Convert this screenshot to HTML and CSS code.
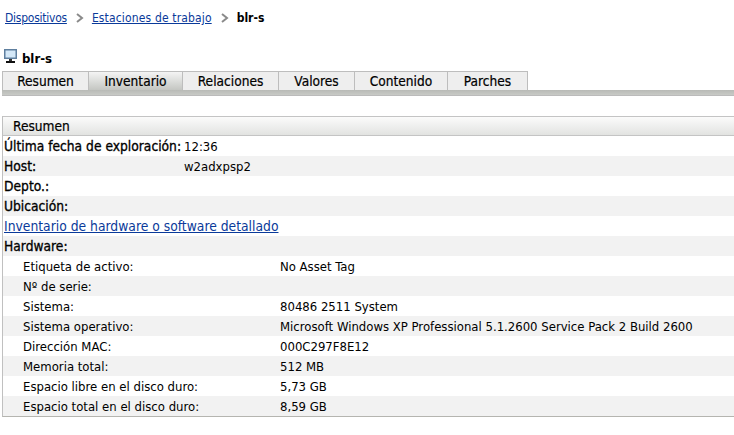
FILE: index.html
```html
<!DOCTYPE html>
<html lang="es">
<head>
<meta charset="utf-8">
<title>blr-s</title>
<link rel="stylesheet" href="styles.css">
</head>
<body>
<nav class="crumbs">
  <a href="#" class="tight">Dispositivos</a>
  <svg class="chev" width="9" height="10" viewBox="0 0 9 10"><path d="M2 1 L7 5 L2 9" fill="none" stroke="#8a8a8a" stroke-width="2"/></svg>
  <a href="#" class="wide">Estaciones de trabajo</a>
  <svg class="chev" width="9" height="10" viewBox="0 0 9 10"><path d="M2 1 L7 5 L2 9" fill="none" stroke="#8a8a8a" stroke-width="2"/></svg>
  <span class="here">blr-s</span>
</nav>
<h1 class="title">
  <svg class="pc" width="13" height="15" viewBox="0 0 13 15"><rect x="0" y="0" width="13" height="10" fill="#5f7f9f"/><rect x="1.5" y="1.5" width="10" height="7" fill="#d4e8f8"/><rect x="5" y="10" width="3" height="2" fill="#333"/><rect x="2" y="12" width="9" height="2" fill="#111"/></svg>
  <span>blr-s</span>
</h1>
<div class="tabs">
  <div class="tab t1">Resumen</div>
  <div class="tab t2 active">Inventario</div>
  <div class="tab t3">Relaciones</div>
  <div class="tab t4">Valores</div>
  <div class="tab t5">Contenido</div>
  <div class="tab t6">Parches</div>
</div>
<div class="tabbar"></div>
<section class="panel">
  <div class="panel-head">Resumen</div>
  <div class="row"><b class="k1">Última fecha de exploración:</b><span class="v">12:36</span></div>
  <div class="row"><b class="k1">Host:</b><span class="v">w2adxpsp2</span></div>
  <div class="row"><b class="k1">Depto.:</b></div>
  <div class="row"><b class="k1">Ubicación:</b></div>
  <div class="row"><a href="#" class="link">Inventario de hardware o software detallado</a></div>
  <div class="row"><b class="k1">Hardware:</b></div>
  <div class="row"><span class="k2">Etiqueta de activo:</span><span>No Asset Tag</span></div>
  <div class="row"><span class="k2">Nº de serie:</span></div>
  <div class="row"><span class="k2">Sistema:</span><span>80486 2511 System</span></div>
  <div class="row"><span class="k2">Sistema operativo:</span><span>Microsoft Windows XP Professional 5.1.2600 Service Pack 2 Build 2600</span></div>
  <div class="row"><span class="k2">Dirección MAC:</span><span>000C297F8E12</span></div>
  <div class="row"><span class="k2">Memoria total:</span><span>512 MB</span></div>
  <div class="row"><span class="k2">Espacio libre en el disco duro:</span><span>5,73 GB</span></div>
  <div class="row"><span class="k2">Espacio total en el disco duro:</span><span>8,59 GB</span></div>
</section>
</body>
</html>
```
FILE: styles.css
```css
html, body { margin: 0; padding: 0; background: #fff; }
body { font-family: "DejaVu Sans Condensed", "DejaVu Sans", sans-serif; font-stretch: condensed; font-size: 13px; color: #000; height: 435px; overflow: hidden; }
a { color: #0a3a9a; text-decoration: underline; }
.crumbs { display: flex; align-items: center; height: 18px; padding: 9px 0 0 5px; gap: 8px; font-size: 12px; }
.tight { letter-spacing: -0.25px; }
.wide { letter-spacing: 0.15px; }
.here { font-weight: bold; }
.title { display: flex; align-items: flex-start; gap: 5px; margin: 22px 0 0 4px; height: 22px; font-size: 13px; line-height: 20px; font-weight: bold; }
.pc { flex: none; }
.tabs { display: flex; margin: 0 0 0 2px; height: 19px; }
.tab { box-sizing: border-box; height: 19px; border: 1px solid #bdbdbd; border-bottom: 0; border-left: 0; background: #eeeeee; font-size: 13.6px; -webkit-text-stroke: 0.2px #000; display: flex; align-items: center; justify-content: center; }
.t1 { width: 87px; border-left: 1px solid #bdbdbd; }
.t2 { width: 94px; }
.t3 { width: 96px; }
.t4 { width: 76px; }
.t5 { width: 93px; }
.t6 { width: 80px; }
.active { background: linear-gradient(#f4f4f4, #c4c6c2); }
.tabbar { height: 6px; margin-left: 2px; background: linear-gradient(#b8bab6, #c8cac6); border-bottom: 1px solid #bbb; box-sizing: border-box; }
.panel { margin: 20px 0 0 2px; border-left: 1px solid #c0c0c0; border-bottom: 1px solid #b5b5b0; }
.panel-head { box-sizing: border-box; height: 20px; border-top: 1px solid #c4c4c4; border-bottom: 1px solid #c4c4c4; padding-left: 10px; background: linear-gradient(#fbfbfb, #e2e3e1); font-size: 13.6px; -webkit-text-stroke: 0.2px #000; display: flex; align-items: center; }
.row { display: flex; align-items: center; height: 20px; padding-left: 1px; }
.row:nth-child(odd) { background: #f2f2f2; }
.k1 { font-size: 13.7px; font-weight: normal; -webkit-text-stroke: 0.3px #000; width: 180px; white-space: nowrap; flex: none; }
.k2 { width: 257px; margin-left: 19px; flex: none; white-space: nowrap; }
.link { font-size: 13.75px; }
```
